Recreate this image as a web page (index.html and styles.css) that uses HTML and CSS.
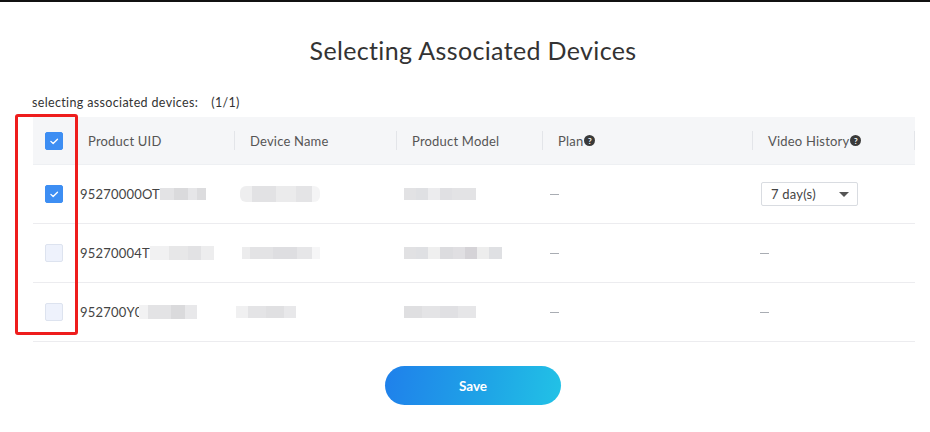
FILE: index.html
```html
<!DOCTYPE html>
<html>
<head>
<meta charset="utf-8">
<link rel="stylesheet" href="styles.css">
</head>
<body>
<div class="page">
  <h1 class="title">Selecting Associated Devices</h1>
  <div class="subtitle">selecting associated devices:<span class="count">(1/1)</span></div>
  <div class="table">
    <div class="row head">
      <div class="cell check"><span class="cb on"><svg viewBox="0 0 17 17"><path d="M5.2 8.9l2.4 2.3 4.6-4.6" fill="none" stroke="#fff" stroke-width="1.4" stroke-linecap="round" stroke-linejoin="round"/></svg></span></div>
      <div class="cell">Product UID</div>
      <div class="cell sep">Device Name</div>
      <div class="cell sep">Product Model</div>
      <div class="cell sep">Plan<span class="q">?</span></div>
      <div class="cell sep sepr">Video History<span class="q">?</span></div>
    </div>
    <div class="row">
      <div class="cell check"><span class="cb on"><svg viewBox="0 0 17 17"><path d="M5.2 8.9l2.4 2.3 4.6-4.6" fill="none" stroke="#fff" stroke-width="1.4" stroke-linecap="round" stroke-linejoin="round"/></svg></span></div>
      <div class="cell d">95270000OT<span class="blur b1"></span></div>
      <div class="cell d"><span class="blur b2"></span></div>
      <div class="cell d"><span class="blur b3"></span></div>
      <div class="cell d"><span class="dash"></span></div>
      <div class="cell d"><span class="select">7 day(s)<span class="caret"></span></span></div>
    </div>
    <div class="row">
      <div class="cell check"><span class="cb"></span></div>
      <div class="cell d">95270004T<span class="blur b4"></span></div>
      <div class="cell d"><span class="blur b5"></span></div>
      <div class="cell d"><span class="blur b6"></span></div>
      <div class="cell d"><span class="dash"></span></div>
      <div class="cell d"><span class="dash"></span></div>
    </div>
    <div class="row">
      <div class="cell check"><span class="cb"></span></div>
      <div class="cell d">952700Y0<span class="blur b7"></span></div>
      <div class="cell d"><span class="blur b8"></span></div>
      <div class="cell d"><span class="blur b9"></span></div>
      <div class="cell d"><span class="dash"></span></div>
      <div class="cell d"><span class="dash"></span></div>
    </div>
  </div>
  <div class="actions"><button class="save">Save</button></div>
  <div class="mark"></div>
</div>
</body>
</html>
```
FILE: styles.css
```css
html, body { margin: 0; padding: 0; background: #fff; }
body {
  border-top: 2px solid #111;
  font-family: "Lato", "Noto Sans", sans-serif;
  color: #333;
  width: 930px;
  height: 430px;
  overflow: hidden;
}
.page { position: relative; padding: 33px 0 0 16px; }
.title {
  margin: 0;
  text-align: center;
  font-weight: 400;
  font-size: 25px;
  line-height: 30px;
  color: #333;
  letter-spacing: 0.35px;
}
.subtitle {
  margin: 30px 0 0 16px;
  font-size: 12.5px;
  line-height: 16px;
  color: #333;
  letter-spacing: 0.35px;
}
.count { margin-left: 13px; }
.table { margin: 6px 0 0 17px; width: 882px; }
.row {
  display: grid;
  grid-template-columns: 39px 162px 162px 146px 210px 163px;
  height: 58px;
  border-bottom: 1px solid #ececef;
  align-items: center;
  font-size: 13px;
}
.row.head {
  height: 47px;
  background: #f5f6f8;
  border-bottom: 1px solid #eef0f3;
  color: #555;
}
.cell { display: flex; align-items: center; height: 100%; position: relative; padding-left: 16px; white-space: nowrap; letter-spacing: 0.2px; }
.cell.d { padding-left: 8px; color: #444; }
.cell.check { padding-left: 12px; }
.sep::before {
  content: "";
  position: absolute;
  left: 0; top: 14px;
  width: 1px; height: 19px;
  background: #e3e5e9;
}
.sepr::after {
  content: "";
  position: absolute;
  right: 0; top: 14px;
  width: 1px; height: 19px;
  background: #e3e5e9;
}
.cb {
  width: 16px; height: 16px;
  border: 1px solid #dde3ef;
  background: #eef2fc;
  border-radius: 2px;
  display: block;
}
.cb.on { background: #3d8ef3; border-color: #3d8ef3; }
.cb svg { width: 16px; height: 16px; display: block; }
.q {
  display: inline-flex;
  align-items: center;
  justify-content: center;
  width: 11px; height: 11px;
  border-radius: 50%;
  background: #3a3a3a;
  color: #fff;
  font-size: 8px;
  font-weight: 700;
  margin-left: 1px;
  line-height: 1;
  letter-spacing: 0;
}
.blur {
  display: inline-block;
  height: 12px;
  filter: blur(0.6px);
}
.b1 { width: 46px; background: linear-gradient(90deg, #e3e3e5 0 30%, #dadadc 30% 60%, #e6e6e8 60% 80%, #dcdcde 80%); }
.b2 { width: 80px; height: 16px; margin-left: -2px; background: linear-gradient(90deg, #eeeeef 0 15%, #e2e2e4 15% 45%, #ebebec 45% 70%, #e4e4e6 70% 90%, #f4f4f5 90%); border-radius: 6px; }
.b3 { width: 72px; background: linear-gradient(90deg, #e2e2e4 0 17%, #dfe0e3 17% 33%, #ececee 33% 50%, #e0e0e3 50% 67%, #e3e3e5 67% 100%); }
.b4 { width: 64px; height: 14px; background: linear-gradient(90deg, #f1f1f2 0 30%, #e7e7e8 30% 60%, #e2e2e4 60% 80%, #ededee 80%); }
.b5 { width: 78px; background: linear-gradient(90deg, #ececed 0 10%, #e3e3e5 10% 40%, #dedee1 40% 70%, #e6e6e8 70% 90%, #f6f6f7 90%); }
.b6 { width: 98px; background: linear-gradient(90deg, #e1e1e3 0 12%, #dfe0e3 12% 25%, #efefef 25% 37%, #dcdcdf 37% 50%, #e0dfe2 50% 62%, #d5d3d7 62% 75%, #ededed 75% 87%, #dfe0e3 87%); }
.b7 { width: 58px; height: 14px; margin-left: -4px; background: linear-gradient(90deg, #f2f2f3 0 15%, #e3e3e5 15% 55%, #dadadc 55% 80%, #e8e8ea 80%); }
.b8 { width: 60px; margin-left: -6px; background: linear-gradient(90deg, #f0f0f1 0 20%, #e4e4e6 20% 50%, #e0e0e2 50% 80%, #e8e8ea 80%); }
.b9 { width: 72px; background: linear-gradient(90deg, #dfdfe1 0 25%, #e4e4e6 25% 50%, #e0e0e3 50% 75%, #e6e6e8 75%); }
.dash {
  display: inline-block;
  width: 9px; height: 1px;
  background: #a9adb3;
}
.select {
  display: flex;
  align-items: center;
  box-sizing: border-box;
  width: 97px; height: 24px;
  border: 1px solid #d9dce1;
  border-radius: 2px;
  padding-left: 9px;
  font-size: 13px;
  color: #444;
  position: relative;
  margin-left: 1px;
}
.caret {
  position: absolute;
  right: 8px; top: 9px;
  width: 0; height: 0;
  border-left: 5px solid transparent;
  border-right: 5px solid transparent;
  border-top: 5px solid #555;
}
.actions { display: flex; justify-content: center; margin-top: 24px; }
.save {
  width: 176px; height: 39px;
  border: none;
  border-radius: 20px;
  background: linear-gradient(100deg, #1f80eb 0%, #1fa6e6 60%, #22c2e6 100%);
  color: #fff;
  font-family: "Lato", "Noto Sans", sans-serif;
  font-size: 13.5px;
  font-weight: 700;
}
.mark {
  position: absolute;
  left: 15px; top: 112px;
  width: 57px; height: 215px;
  border: 3px solid #ee1d1d;
  border-radius: 3px;
}
```
